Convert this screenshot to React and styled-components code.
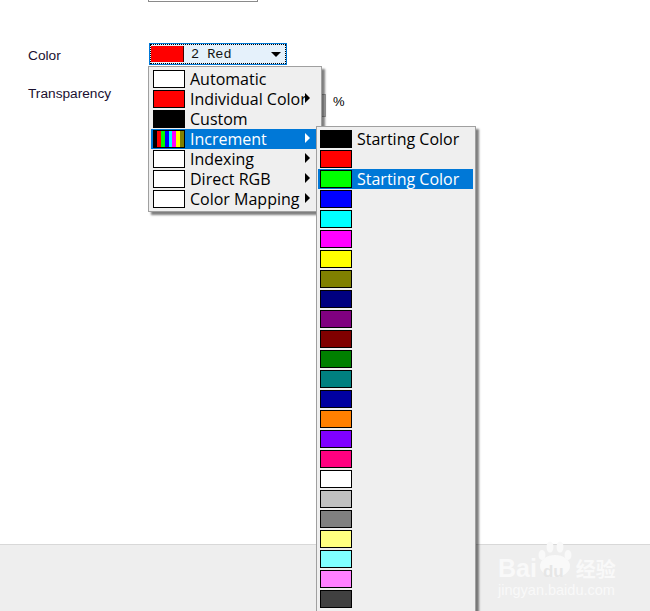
import React from 'react'
import styled, { createGlobalStyle } from 'styled-components'

const GlobalStyle = createGlobalStyle`
    html, body {
        margin: 0;
        padding: 0;
        background: #fff;
    }
`

const Page = styled.div`
    position: relative;
    width: 650px;
    height: 611px;
    overflow: hidden;
    display: flex;
    flex-direction: column;
    font-family: "Open Sans", "Liberation Sans", sans-serif;
    color: #000;
`

const Main = styled.div`
    flex: 1;
    padding-left: 28px;
`

const TopField = styled.div`
    width: 108px;
    height: 1px;
    margin: 0 0 41px 120px;
    border: 1px solid #8a8a8a;
    border-top: none;
`

const FormRow = styled.div`
    display: flex;
    align-items: flex-start;
    height: ${p => p.$height}px;
`

const Label = styled.div`
    width: 121px;
    padding-top: ${p => p.$top}px;
    font-family: "Liberation Sans", sans-serif;
    font-size: 13.7px;
    line-height: 16px;
    color: #1a1030;
`

const Select = styled.div`
    width: 134px;
    height: 18px;
    display: flex;
    align-items: center;
    padding: 1px;
    background: #e5f1fb;
    border: 1px solid #0078d7;
    outline: 1px dotted #000;
    outline-offset: -2px;
`

const SelectSwatch = styled.span`
    width: 32px;
    height: 16px;
    background: #f00;
    border-right: 1px solid #400;
`

const SelectText = styled.span`
    flex: 1;
    margin-left: 7px;
    font-family: "Liberation Mono", monospace;
    font-size: 13.5px;
    line-height: 17px;
    color: #111;
`

const SelectCaret = styled.span`
    width: 0;
    height: 0;
    margin-right: 4px;
    border-left: 5px solid transparent;
    border-right: 5px solid transparent;
    border-top: 5px solid #000;
`

const Spinner = styled.div`
    width: 4px;
    height: 21px;
    margin: 8px 0 0 172px;
    background: #d8d8d8;
    border: 1px solid #a8a8a8;
    border-left: none;
`

const Percent = styled.span`
    margin: 8px 0 0 7px;
    font-family: "Liberation Sans", sans-serif;
    font-size: 13px;
    line-height: 16px;
`

const Footer = styled.div`
    height: 66px;
    background: #eee;
    border-top: 1px solid #d8d8d8;
`

const Watermark = styled.div`
    position: absolute;
    left: 498px;
    top: 540px;
    width: 120px;
    color: #f9f9f9;
`

const Paw = styled.svg`
    position: absolute;
    left: 39px;
    top: 1px;
`

const LogoLine = styled.div`
    position: absolute;
    left: 0;
    top: 17px;
    display: flex;
    align-items: baseline;
    font-family: "Liberation Sans", sans-serif;
    font-weight: 700;
    font-size: 25px;
    line-height: 22px;
    white-space: nowrap;
`

const LogoDu = styled.span`
    margin-left: 6px;
    font-size: 17px;
    color: #e6e6e6;
`

const LogoCjk = styled.span`
    margin-left: 12px;
    font-family: "Noto Sans CJK SC", sans-serif;
    font-size: 20px;
`

const WatermarkUrl = styled.div`
    position: absolute;
    left: 0;
    top: 43px;
    font-family: "Liberation Sans", sans-serif;
    font-size: 14.5px;
    line-height: 14px;
    white-space: nowrap;
`

const Menu = styled.div`
    position: absolute;
    left: ${p => p.$left}px;
    top: ${p => p.$top}px;
    width: ${p => p.$width}px;
    box-sizing: border-box;
    padding: 2px ${p => p.$inset}px;
    background: #efefef;
    border: 1px solid #a0a0a0;
    box-shadow: 3px 3px 2px rgba(0, 0, 0, 0.5);
`

const Row = styled.div`
    position: relative;
    box-sizing: border-box;
    display: flex;
    align-items: center;
    height: 20px;
    padding-left: 2px;
    width: ${p => p.$width}px;
    background: ${p => (p.$active ? '#0078d7' : 'transparent')};
    color: ${p => (p.$active ? '#fff' : '#000')};
    font-size: 16px;
    white-space: nowrap;
`

const Swatch = styled.span`
    flex: none;
    box-sizing: border-box;
    width: 32px;
    height: 18px;
    background: ${p => p.$color};
    border: 1px solid #000;
`

const StripeSwatch = styled(Swatch)`
    display: flex;
    padding: 0 0 0 3px;
`

const Stripe = styled.span`
    flex: 1;
    background: ${p => p.$color};
`

const RowText = styled.span`
    margin-left: 5px;
    line-height: 20px;
`

const Arrow = styled.span`
    position: absolute;
    right: 6px;
    top: 4px;
    width: 0;
    height: 0;
    border-top: 5px solid transparent;
    border-bottom: 5px solid transparent;
    border-left: 5px solid ${p => (p.$active ? '#fff' : '#000')};
`

const mainItems = [
    { label: 'Automatic', color: '#fff' },
    { label: 'Individual Color', color: '#f00', arrow: true },
    { label: 'Custom', color: '#000' },
    { label: 'Increment', stripes: true, arrow: true, active: true },
    { label: 'Indexing', color: '#fff', arrow: true },
    { label: 'Direct RGB', color: '#fff', arrow: true },
    { label: 'Color Mapping', color: '#fff', arrow: true },
]

const stripes = ['#f00', '#0f0', '#00f', '#0ff', '#f0f', '#ff0', '#808000']

const incrementColors = [
    '#000', '#f00', '#0f0', '#00f', '#0ff', '#f0f', '#ff0', '#808000',
    '#000080', '#800080', '#800000', '#008000', '#008080', '#0000a0', '#ff8000', '#8000ff',
    '#ff0080', '#fff', '#c0c0c0', '#808080', '#ffff80', '#80ffff', '#ff80ff', '#404040',
]

const App = () => {
    return (
        <Page>
            <GlobalStyle />
            <Main>
                <TopField />
                <FormRow $height={43}>
                    <Label $top={5}>Color</Label>
                    <Select>
                        <SelectSwatch />
                        <SelectText>2 Red</SelectText>
                        <SelectCaret />
                    </Select>
                </FormRow>
                <FormRow $height={32}>
                    <Label $top={0}>Transparency</Label>
                    <Spinner />
                    <Percent>%</Percent>
                </FormRow>
            </Main>
            <Footer />
            <Watermark>
                <Paw width="36" height="36" viewBox="0 0 36 36" fill="#f9f9f9">
                    <ellipse cx="5" cy="14" rx="3.5" ry="5" />
                    <ellipse cx="13" cy="6" rx="3.5" ry="5.5" />
                    <ellipse cx="23" cy="6" rx="3.5" ry="5.5" />
                    <ellipse cx="31" cy="14" rx="3.5" ry="5" />
                    <ellipse cx="18" cy="25" rx="15" ry="11" />
                </Paw>
                <LogoLine>
                    Bai<LogoDu>du</LogoDu><LogoCjk>经验</LogoCjk>
                </LogoLine>
                <WatermarkUrl>jingyan.baidu.com</WatermarkUrl>
            </Watermark>
            <Menu $left={148} $top={66} $width={174} $inset={2}>
                {mainItems.map(item => (
                    <Row key={item.label} $active={item.active} $width={165}>
                        {item.stripes ? (
                            <StripeSwatch $color="#000">
                                {stripes.map(c => <Stripe key={c} $color={c} />)}
                            </StripeSwatch>
                        ) : (
                            <Swatch $color={item.color} />
                        )}
                        <RowText>{item.label}</RowText>
                        {item.arrow && <Arrow $active={item.active} />}
                    </Row>
                ))}
            </Menu>
            <Menu $left={316} $top={126} $width={160} $inset={1}>
                {incrementColors.map((color, i) => (
                    <Row key={i} $active={i === 2} $width={155}>
                        <Swatch $color={color} />
                        {(i === 0 || i === 2) && <RowText>Starting Color</RowText>}
                    </Row>
                ))}
            </Menu>
        </Page>
    )
}

export default App
